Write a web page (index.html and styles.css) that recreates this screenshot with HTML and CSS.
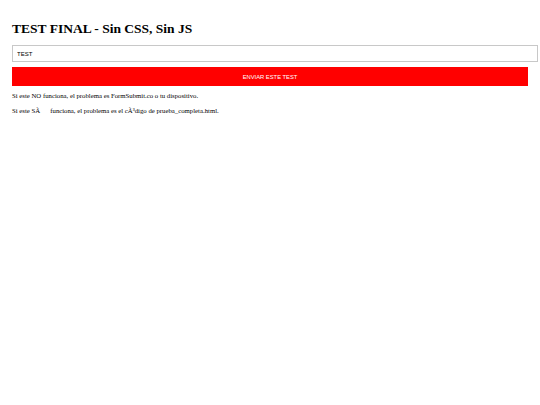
FILE: index.html
```html
<!DOCTYPE html>
<html>
<head>
<meta charset="utf-8">
<link rel="stylesheet" href="styles.css">
</head>
<body>
<h1 class="title">TEST FINAL - Sin CSS, Sin JS</h1>
<form class="form">
  <input class="field" type="text" value="TEST">
  <button class="send" type="button">ENVIAR ESTE TEST</button>
</form>
<p class="note">Si este NO funciona, el problema es FormSubmit.co o tu dispositivo.</p>
<p class="note">Si este SÃ&nbsp;&nbsp;&nbsp;&nbsp;&nbsp; funciona, el problema es el cÃ³digo de prueba_completa.html.</p>
</body>
</html>
```
FILE: styles.css
```css
body {
  margin: 0;
  padding: 0 12px;
  background: #fff;
  font-family: "Liberation Serif", "Times New Roman", serif;
  color: #000;
}
.title {
  font-size: 13.5px;
  font-weight: bold;
  margin: 0;
  padding-top: 20px;
  line-height: 17px;
}
.form {
  display: flex;
  flex-direction: column;
  gap: 5px;
  margin-top: 8px;
}
.field {
  box-sizing: border-box;
  width: 526px;
  height: 17px;
  margin: 0;
  padding: 0 4px;
  border: 1px solid #c8c8c8;
  font-family: "Liberation Sans", Arial, sans-serif;
  font-size: 6px;
  color: #000;
  outline: none;
}
.send {
  box-sizing: border-box;
  width: 516px;
  height: 19px;
  margin: 0;
  border: none;
  background: #ff0000;
  color: #fff;
  font-family: "Liberation Sans", Arial, sans-serif;
  font-size: 5.8px;
  padding: 0;
}
.note {
  font-size: 6.75px;
  margin: 0;
  line-height: 8px;
}
.form + .note {
  margin-top: 6px;
}
.note + .note {
  margin-top: 7px;
}
```
